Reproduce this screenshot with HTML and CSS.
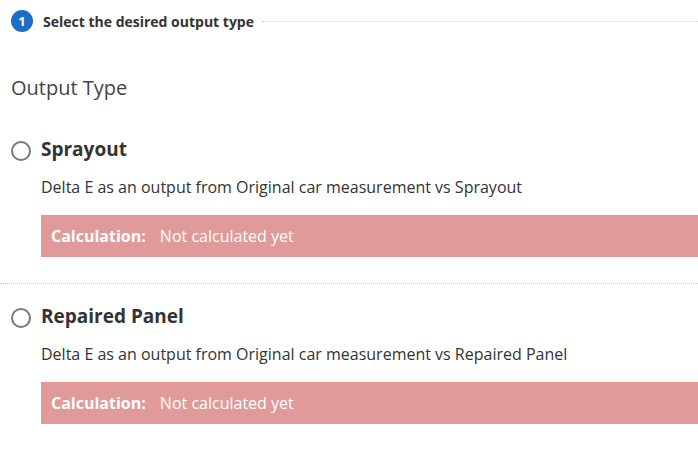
FILE: index.html
```html
<!DOCTYPE html>
<html lang="en">
<head>
    <meta charset="UTF-8">
    <meta name="viewport" content="width=device-width, initial-scale=1.0">
    <title>Output Type</title>
    <link rel="stylesheet" href="styles.css">
</head>
<body>

    <div class="step">
        <span class="step-number">1</span>
        <span class="step-title">Select the desired output type</span>
        <span class="step-line"></span>
    </div>

    <h2 class="section-title">Output Type</h2>

    <div class="option option-first">
        <label class="option-head">
            <span class="radio"></span>
            <span class="option-name">Sprayout</span>
        </label>
        <p class="option-desc">Delta E as an output from Original car measurement vs Sprayout</p>
        <div class="calc">
            <span class="calc-label">Calculation:</span>
            <span class="calc-value">Not calculated yet</span>
        </div>
    </div>

    <div class="separator"></div>

    <div class="option">
        <label class="option-head">
            <span class="radio"></span>
            <span class="option-name">Repaired Panel</span>
        </label>
        <p class="option-desc">Delta E as an output from Original car measurement vs Repaired Panel</p>
        <div class="calc">
            <span class="calc-label">Calculation:</span>
            <span class="calc-value">Not calculated yet</span>
        </div>
    </div>

</body>
</html>
```

FILE: styles.css
```css
body {
    font-family: 'Open Sans', 'Liberation Sans', sans-serif;
    margin: 0;
    padding: 0;
    background-color: #fff;
    color: #333;
    overflow: hidden;
}

/* Step header */
.step {
    display: flex;
    align-items: center;
    padding: 10px 0 0 11px;
}

.step-number {
    width: 22px;
    height: 22px;
    border-radius: 50%;
    background-color: #1a6ec8;
    color: #fff;
    font-size: 13px;
    font-weight: 700;
    display: flex;
    align-items: center;
    justify-content: center;
    margin-right: 10px;
}

.step-title {
    font-size: 14px;
    font-weight: 700;
    color: #333;
    margin-right: 8px;
}

.step-line {
    flex: 1;
    border-top: 1px dotted #d0d0d0;
    margin-top: 1px;
}

.section-title {
    font-size: 20px;
    font-weight: 400;
    line-height: 28px;
    color: #444;
    margin: 42px 0 0 11px;
}

/* Options */
.option {
    padding-left: 11px;
}

.option-first {
    padding-top: 33px;
}

.option-head {
    display: flex;
    align-items: center;
    gap: 10px;
    height: 28px;
}

.radio {
    width: 16px;
    height: 16px;
    border: 2px solid #777;
    border-radius: 50%;
    margin-top: 3px;
}

.option-name {
    font-size: 19px;
    font-weight: 700;
    color: #333;
}

.option-desc {
    font-size: 16px;
    line-height: 22px;
    margin: 13px 0 0 30px;
    color: #333;
}

.calc {
    margin: 17px 0 0 30px;
    height: 42px;
    padding-left: 10px;
    background-color: #e09a9a;
    color: #fff;
    font-size: 16px;
    display: flex;
    align-items: center;
}

.calc-label {
    font-weight: 700;
    margin-right: 14px;
}

.separator {
    border-top: 1px dotted #c8c8c8;
    margin: 26px 0 18px 0;
}
```
